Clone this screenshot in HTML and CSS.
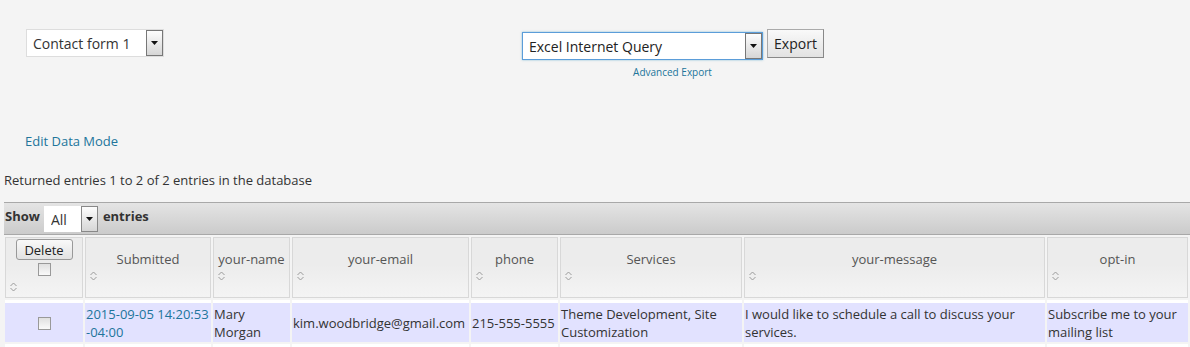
FILE: index.html
```html
<!DOCTYPE html>
<html lang="en">
<head>
  <meta charset="UTF-8" />
  <title>Contact Form DB</title>
  <link rel="stylesheet" href="styles.css">
</head>
<body>

  <div class="top-row">
    <div class="pick">
      <span class="combo combo-form">
        <select class="combo-select"><option>Contact form 1</option></select>
        <span class="combo-arrow"></span>
      </span>
    </div>
    <div class="export">
      <div class="export-line">
        <span class="combo combo-export">
          <select class="combo-select"><option>Excel Internet Query</option></select>
          <span class="combo-arrow"></span>
        </span>
        <button class="btn btn-export">Export</button>
      </div>
      <a class="adv-link" href="#">Advanced Export</a>
    </div>
  </div>

  <a class="edit-link" href="#">Edit Data Mode</a>

  <p class="returned">Returned entries 1 to 2 of 2 entries in the database</p>

  <div class="table-wrap">
    <div class="toolbar">
      <label class="show">Show
        <span class="combo combo-len">
          <select class="combo-select"><option>All</option></select>
          <span class="combo-arrow"></span>
        </span>
        <span class="entries">entries</span>
      </label>
    </div>

    <table class="entries-table">
      <colgroup>
        <col style="width:78px"><col style="width:126px"><col style="width:77px">
        <col style="width:177px"><col style="width:87px"><col style="width:182px">
        <col style="width:301px"><col style="width:141px"><col style="width:160px">
      </colgroup>
      <thead>
        <tr>
          <th class="th-check">
            <button class="btn btn-delete">Delete</button>
            <span class="box"></span>
            <span class="sort sort-low"></span>
          </th>
          <th><span class="th-label">Submitted</span><span class="sort"></span></th>
          <th><span class="th-label">your-name</span><span class="sort"></span></th>
          <th><span class="th-label">your-email</span><span class="sort"></span></th>
          <th><span class="th-label">phone</span><span class="sort"></span></th>
          <th><span class="th-label">Services</span><span class="sort"></span></th>
          <th><span class="th-label">your-message</span><span class="sort"></span></th>
          <th><span class="th-label">opt-in</span><span class="sort"></span></th>
          <th><span class="th-label">&nbsp;</span><span class="sort"></span></th>
        </tr>
      </thead>
      <tbody>
        <tr class="odd">
          <td class="td-check"><span class="box"></span></td>
          <td><a href="#">2015-09-05 14:20:53 -04:00</a></td>
          <td>Mary Morgan</td>
          <td>kim.woodbridge@gmail.com</td>
          <td>215-555-5555</td>
          <td>Theme Development, Site Customization</td>
          <td>I would like to schedule a call to discuss your services.</td>
          <td>Subscribe me to your mailing list</td>
          <td></td>
        </tr>
        <tr class="even">
          <td>&nbsp;</td><td></td><td></td><td></td><td></td><td></td><td></td><td></td><td></td>
        </tr>
      </tbody>
    </table>
  </div>

  <script>
    // icones de tri
    document.querySelectorAll('.sort').forEach(s => {
      s.innerHTML = '<svg width="7" height="10" viewBox="0 0 7 10"><path d="M0.5 4 L3.5 1 L6.5 4 M0.5 6 L3.5 9 L6.5 6" fill="none" stroke="#9a9a9a" stroke-width="1"/></svg>';
    });
    document.querySelectorAll('.combo-arrow').forEach(a => {
      a.innerHTML = '<svg width="7" height="4" viewBox="0 0 7 4"><path d="M0 0 H7 L3.5 4 Z" fill="#111"/></svg>';
    });
  </script>

</body>
</html>
```

FILE: styles.css
```css
body {
  margin: 0;
  background: #f4f4f4;
  font-family: "Open Sans", "Liberation Sans", sans-serif;
  font-size: 13px;
  color: #333;
  overflow: hidden;
}
a {
  color: #21759b;
  text-decoration: none;
}
.top-row {
  display: flex;
  align-items: flex-start;
  padding-top: 29px;
}
.pick {
  padding-left: 26px;
  width: 138px;
}
.export {
  margin-left: 358px;
  display: flex;
  flex-direction: column;
  align-items: center;
}
.export-line {
  display: flex;
  align-items: flex-start;
  gap: 4px;
}
.combo {
  display: inline-flex;
  align-items: stretch;
  background: #fff;
  border: 1px solid #ddd;
  box-sizing: border-box;
}
.combo-select {
  appearance: none;
  -webkit-appearance: none;
  border: none;
  background: transparent;
  font-family: inherit;
  font-size: 14px;
  color: #333;
  padding: 0 0 0 6px;
  flex: 1;
  min-width: 0;
  outline: none;
}
.combo-arrow {
  width: 15px;
  border: 1px solid #777;
  background: linear-gradient(#fdfdfd, #d6d6d6);
  display: flex;
  align-items: center;
  justify-content: center;
}
.combo-form {
  width: 138px;
  height: 28px;
}
.combo-export {
  width: 241px;
  height: 28px;
  margin-top: 3px;
  border-color: #5b9dd9;
  box-shadow: 0 0 2px rgba(30, 140, 190, .5);
}
.combo-export .combo-select {
  color: #222;
}
.btn {
  font-family: inherit;
  border: 1px solid #aaa;
  border-right-color: #888;
  border-bottom-color: #888;
  background: linear-gradient(#f9f9f9, #e2e2e2);
  color: #222;
  cursor: pointer;
}
.btn-export {
  width: 57px;
  height: 29px;
  font-size: 14px;
  padding: 0;
}
.adv-link {
  font-size: 10px;
  margin-top: 5px;
  padding-right: 1px;
}
.edit-link {
  display: block;
  margin: 53px 0 0 25px;
  width: max-content;
}
.returned {
  margin: 21px 0 0 4px;
}
.table-wrap {
  margin: 13px 0 0 4px;
  overflow: hidden;
}
.toolbar {
  height: 31px;
  border-top: 1px solid #a8a8a8;
  border-bottom: 1px solid #a8a8a8;
  background: linear-gradient(#e4e4e4, #cbcbcb);
  display: flex;
  align-items: flex-start;
}
.show {
  display: flex;
  align-items: flex-start;
  font-weight: bold;
  color: #333;
  line-height: 20px;
  padding: 3px 0 0 1px;
}
.combo-len {
  width: 54px;
  height: 26px;
  margin: 0 5px 0 4px;
  border: none;
}
.combo-len .combo-select {
  font-size: 14px;
  font-weight: normal;
  padding-left: 7px;
}
.combo-len .combo-arrow {
  width: 15px;
  border-color: #888;
}
.entries {
  font-weight: bold;
}
.entries-table {
  table-layout: fixed;
  border-collapse: separate;
  border-spacing: 2px;
  margin-left: -1px;
  width: 1349px;
}
.entries-table th {
  height: 59px;
  border: 1px solid #d8d8d8;
  background: linear-gradient(#ececec 45%, #f4f4f4);
  font-weight: normal;
  color: #555;
  padding: 0 4px;
  vertical-align: top;
  text-align: center;
}
.th-label {
  display: block;
  margin-top: 12px;
  line-height: 18px;
}
.sort {
  display: block;
  text-align: left;
  height: 12px;
  line-height: 0;
  margin-top: 3px;
}
.btn-delete {
  display: block;
  margin: 1px auto 0;
  width: 57px;
  height: 21px;
  font-size: 13px;
  padding: 0;
  border-radius: 3px;
  border-color: #999;
}
.box {
  display: block;
  width: 11px;
  height: 11px;
  border: 1px solid #999;
  background: linear-gradient(#e0e0e0, #fafafa);
  margin: 3px auto 0;
}
.th-check .sort-low {
  margin-top: 6px;
}
.entries-table tbody td {
  line-height: 18px;
  padding: 2px 1px 1px 1px;
  vertical-align: middle;
  color: #333;
  border-top: 3px solid #fff;
}
.entries-table tr.odd td {
  background: #e2e2ff;
}
.entries-table tr.even td {
  background: #fff;
  border-top: none;
}
.td-check .box {
  margin: 0 auto;
}
```
